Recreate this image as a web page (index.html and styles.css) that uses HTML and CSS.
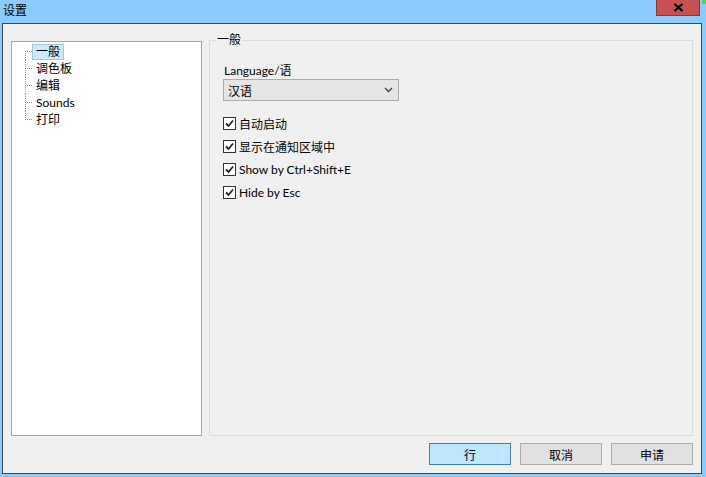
FILE: index.html
```html
<!DOCTYPE html>
<html lang="zh">
<head>
  <meta charset="UTF-8" />
  <title>设置</title>
  <link rel="stylesheet" href="styles.css">
</head>
<body>

  <div class="window">
    <!-- Title bar -->
    <div class="titlebar">
      <span class="title">设置</span>
      <div class="close-btn">
        <svg width="11" height="9" viewBox="0 0 11 9">
          <path d="M1.5 1 L9.5 8 M9.5 1 L1.5 8" stroke="#000" stroke-width="2.2" fill="none"/>
        </svg>
      </div>
      <div class="corner-dot"></div>
    </div>

    <!-- Client area -->
    <div class="client">
      <div class="main">
        <ul class="tree">
          <li class="first"><span class="node selected">一般</span></li>
          <li><span class="node">调色板</span></li>
          <li><span class="node">编辑</span></li>
          <li><span class="node">Sounds</span></li>
          <li class="last"><span class="node">打印</span></li>
        </ul>

        <div class="group">
          <div class="legend">一般</div>
          <div class="field-label">Language/语</div>
          <div class="select">
            <span>汉语</span>
            <svg width="9" height="6" viewBox="0 0 9 6">
              <path d="M1 1 L4.5 4.5 L8 1" stroke="#444" stroke-width="1.4" fill="none"/>
            </svg>
          </div>

          <div class="checks">
            <label class="check"><span class="box"><svg width="11" height="11" viewBox="0 0 11 11"><path d="M2 5.5 L4.5 8 L9 2.5" stroke="#222" stroke-width="1.8" fill="none"/></svg></span>自动启动</label>
            <label class="check"><span class="box"><svg width="11" height="11" viewBox="0 0 11 11"><path d="M2 5.5 L4.5 8 L9 2.5" stroke="#222" stroke-width="1.8" fill="none"/></svg></span>显示在通知区域中</label>
            <label class="check"><span class="box"><svg width="11" height="11" viewBox="0 0 11 11"><path d="M2 5.5 L4.5 8 L9 2.5" stroke="#222" stroke-width="1.8" fill="none"/></svg></span>Show by Ctrl+Shift+E</label>
            <label class="check"><span class="box"><svg width="11" height="11" viewBox="0 0 11 11"><path d="M2 5.5 L4.5 8 L9 2.5" stroke="#222" stroke-width="1.8" fill="none"/></svg></span>Hide by Esc</label>
          </div>
        </div>
      </div>

      <!-- Buttons -->
      <div class="buttons">
        <button class="btn default">行</button>
        <button class="btn">取消</button>
        <button class="btn">申请</button>
      </div>
    </div>
  </div>

</body>
</html>
```

FILE: styles.css
```css
* {
  box-sizing: border-box;
  margin: 0;
  padding: 0;
}

body {
  width: 706px;
  height: 477px;
  overflow: hidden;
  background-color: #8ccbfe;
  font-family: "Segoe UI", Lato, "Noto Sans CJK SC", sans-serif;
  font-size: 12px;
  color: #000;
}

.window {
  display: flex;
  flex-direction: column;
  height: 100%;
}

/* Title bar */
.titlebar {
  display: flex;
  align-items: flex-start;
  height: 23px;
  padding-left: 3px;
}

.title {
  flex: 1;
  line-height: 22px;
}

.close-btn {
  display: flex;
  align-items: center;
  justify-content: center;
  width: 44px;
  height: 16px;
  margin-right: 2px;
  background-color: #c75050;
  border: 1px solid #8f3434;
  border-top: none;
}

.corner-dot {
  width: 4px;
  height: 4px;
  background-color: #5fd05f;
}

/* Client */
.client {
  display: flex;
  flex-direction: column;
  height: 451px;
  margin: 0 4px 0 2px;
  background-color: #f0f0f0;
  border: 1px solid #464646;
  padding: 16px 8px 8px 8px;
}

.main {
  display: flex;
  gap: 7px;
  height: 396px;
}

/* Tree */
.tree {
  list-style: none;
  width: 191px;
  margin-top: 1px;
  background-color: #fff;
  border: 1px solid #a6a6a6;
  padding: 1px 0 0 0;
}

.tree li {
  height: 17px;
  padding-left: 20px;
  background-image:
    repeating-linear-gradient(to bottom, #8a8a8a 0 1px, transparent 1px 2px),
    repeating-linear-gradient(to right, #8a8a8a 0 1px, transparent 1px 2px);
  background-size: 1px 100%, 8px 1px;
  background-position: 13px 0, 13px 8px;
  background-repeat: no-repeat;
}

.tree li.first {
  background-size: 1px 9px, 8px 1px;
  background-position: 13px 100%, 13px 8px;
}

.tree li.last {
  background-size: 1px 9px, 8px 1px;
  background-position: 13px 0, 13px 8px;
}

.node {
  display: inline-block;
  height: 16px;
  line-height: 14px;
  padding: 0 3px;
  border: 1px solid transparent;
  margin-top: 1px;
}

.node.selected {
  background-color: #cce8ff;
  border-color: #99c9ef;
}

/* Group box */
.group {
  flex: 1;
  border: 1px solid #dcdcdc;
  padding: 0 14px;
}

.legend {
  width: fit-content;
  margin: -9px 0 0 -8px;
  padding: 0 1px;
  line-height: 16px;
  background-color: #f0f0f0;
}

.field-label {
  margin-top: 15px;
  line-height: 16px;
}

.select {
  display: flex;
  align-items: center;
  justify-content: space-between;
  width: 176px;
  height: 22px;
  margin: 0 0 0 -1px;
  padding: 0 5px 0 4px;
  background-color: #e5e5e5;
  border: 1px solid #acacac;
}

.checks {
  display: flex;
  flex-direction: column;
  gap: 7px;
  margin-top: 14px;
}

.check {
  display: flex;
  align-items: center;
  gap: 3px;
  height: 16px;
  margin-left: -1px;
}

.box {
  display: flex;
  align-items: center;
  justify-content: center;
  width: 13px;
  height: 13px;
  background-color: #fff;
  border: 1px solid #333;
}

/* Buttons */
.buttons {
  display: flex;
  justify-content: flex-end;
  gap: 9px;
  margin-top: 7px;
}

.btn {
  width: 82px;
  height: 22px;
  font-family: inherit;
  font-size: 12px;
  background-color: #e1e1e1;
  border: 1px solid #adadad;
  color: #000;
}

.btn.default {
  background-color: #bee6fd;
  border-color: #3c7fb1;
}
```
